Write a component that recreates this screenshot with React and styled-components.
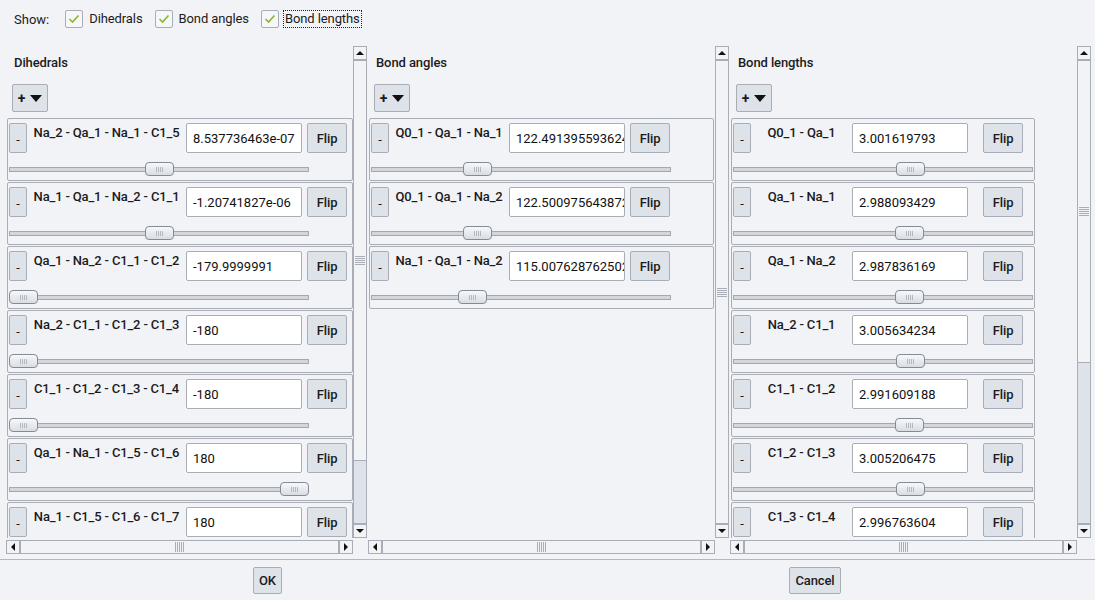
import React from 'react';
import styled, { createGlobalStyle } from 'styled-components';

const LINE = '#a8adb6';
const BTN = '#dee2e9';
const BG = '#f2f3f7';

const GlobalStyle = createGlobalStyle`
  html, body {
    margin: 0;
    padding: 0;
    background: ${BG};
  }
  body {
    font-family: Roboto, "Liberation Sans", sans-serif;
    font-size: 13px;
    color: #1b1b1b;
  }
`;

const Window = styled.div`
  width: 1095px;
  height: 600px;
  background: ${BG};
  display: flex;
  flex-direction: column;
  overflow: hidden;
`;

const ShowBar = styled.div`
  display: flex;
  align-items: center;
  height: 18px;
  padding: 10px 0 0 14px;
  margin-bottom: 18px;
`;

const ShowLabel = styled.span`
  margin-right: 16px;
`;

const CheckItem = styled.label`
  display: flex;
  align-items: center;
  margin-right: 10px;
`;

const Box = styled.span`
  width: 18px;
  height: 18px;
  box-sizing: border-box;
  border: 1px solid ${LINE};
  border-radius: 2px;
  background: #f6f7fa;
  display: flex;
  align-items: center;
  justify-content: center;
  margin-right: 6px;
`;

const CheckText = styled.span`
  line-height: 16px;
  padding: 0 1px;
  letter-spacing: -0.1px;
  border: 1px dotted ${(p) => (p.$focused ? '#222' : 'transparent')};
  margin-left: -2px;
`;

const Columns = styled.div`
  display: grid;
  grid-template-columns: repeat(3, 361px);
  column-gap: 1px;
  padding-left: 6px;
`;

const ScrollPane = styled.div`
  display: grid;
  grid-template-columns: 347px 14px;
  grid-template-rows: 492px 14px;
  row-gap: 2px;
`;

const Viewport = styled.div`
  overflow: hidden;
`;

const Title = styled.div`
  font-weight: 500;
  line-height: 16px;
  letter-spacing: -0.1px;
  padding: 9px 0 0 8px;
`;

const AddButton = styled.div`
  width: 36px;
  height: 28px;
  box-sizing: border-box;
  margin: 13px 0 0 6px;
  border: 1px solid ${LINE};
  border-radius: 2px;
  background: ${BTN};
  display: flex;
  align-items: center;
  justify-content: center;
  gap: 5px;
  font-weight: 700;
  font-size: 14px;
`;

const DownTriangle = styled.span`
  width: 0;
  height: 0;
  border-left: 6px solid transparent;
  border-right: 6px solid transparent;
  border-top: 7px solid #111;
`;

const RowList = styled.div`
  margin-top: 6px;
  padding-left: 1px;
  display: flex;
  flex-direction: column;
  gap: 1px;
`;

const RowBox = styled.div`
  width: ${(p) => p.$width}px;
  height: 63px;
  box-sizing: border-box;
  border: 1px solid ${LINE};
  border-radius: 2px;
  padding: 4px 0 0 1px;
  flex: none;
`;

const TopLine = styled.div`
  display: flex;
  height: 30px;
`;

const Button = styled.div`
  box-sizing: border-box;
  border: 1px solid ${LINE};
  border-radius: 2px;
  background: ${BTN};
  display: flex;
  align-items: center;
  justify-content: center;
  font-weight: 500;
  letter-spacing: -0.1px;
  color: #1b1b1b;
  flex: none;
`;

const MinusButton = styled(Button)`
  width: 18px;
  height: 30px;
  font-weight: 400;
  padding-top: 3px;
`;

const FlipButton = styled(Button)`
  width: 40px;
  height: 30px;
  margin-left: ${(p) => p.$gap}px;
`;

const BondLabel = styled.div`
  width: ${(p) => p.$width}px;
  flex: none;
  text-align: center;
  font-weight: 500;
  letter-spacing: -0.16px;
  line-height: 20px;
  white-space: nowrap;
`;

const Field = styled.input`
  width: 116px;
  height: 30px;
  box-sizing: border-box;
  border: 1px solid ${LINE};
  border-radius: 2px;
  background: #fff;
  padding: 0 0 0 6px;
  margin: 0;
  font: inherit;
  color: #111;
  outline: none;
  flex: none;
`;

const Slider = styled.div`
  position: relative;
  width: 300px;
  height: 14px;
  margin-top: 9px;
`;

const SliderTrack = styled.div`
  position: absolute;
  left: 0;
  right: 0;
  top: 5px;
  height: 5px;
  box-sizing: border-box;
  border: 1px solid #a2a8b1;
  background: #d2d7df;
`;

const SliderThumb = styled.div`
  position: absolute;
  top: 0;
  width: 29px;
  height: 14px;
  box-sizing: border-box;
  border: 1px solid #858b94;
  border-radius: 4px;
  background: linear-gradient(#f7f8fa, #d9dde4);
  display: flex;
  align-items: center;
  justify-content: center;

  &::after {
    content: '';
    width: 7px;
    height: 5px;
    background: repeating-linear-gradient(90deg, #b4b9c1 0 1px, transparent 1px 2px);
  }
`;

const VBar = styled.div`
  display: flex;
  flex-direction: column;
  box-sizing: border-box;
  border: 1px solid ${LINE};
  background: ${BTN};
`;

const HBar = styled.div`
  display: flex;
  box-sizing: border-box;
  border: 1px solid ${LINE};
  background: ${BTN};
`;

const ArrowCell = styled.div`
  flex: 0 0 12px;
  background: ${BG};
  display: flex;
  align-items: center;
  justify-content: center;
  border-${(p) => p.$edge}: 2px solid ${LINE};
`;

const Arrow = styled.span`
  width: 0;
  height: 0;
  ${(p) =>
    p.$dir === 'up' &&
    'border-left: 4px solid transparent; border-right: 4px solid transparent; border-bottom: 4px solid #111;'}
  ${(p) =>
    p.$dir === 'down' &&
    'border-left: 4px solid transparent; border-right: 4px solid transparent; border-top: 4px solid #111;'}
  ${(p) =>
    p.$dir === 'left' &&
    'border-top: 4px solid transparent; border-bottom: 4px solid transparent; border-right: 4px solid #111;'}
  ${(p) =>
    p.$dir === 'right' &&
    'border-top: 4px solid transparent; border-bottom: 4px solid transparent; border-left: 4px solid #111;'}
`;

const VTrack = styled.div`
  flex: 1;
  display: flex;
  flex-direction: column;
`;

const VThumb = styled.div`
  flex: ${(p) => (p.$size ? `0 0 ${p.$size}px` : '1')};
  background: ${BG};
  border-bottom: ${(p) => (p.$size ? `1px solid ${LINE}` : 'none')};
  display: flex;
  align-items: center;
  justify-content: center;

  &::after {
    content: '';
    width: 10px;
    height: 9px;
    background: repeating-linear-gradient(180deg, #a8adb6 0 1px, transparent 1px 2px);
  }
`;

const HThumb = styled.div`
  flex: 1;
  background: ${BG};
  display: flex;
  align-items: center;
  justify-content: center;

  &::after {
    content: '';
    width: 9px;
    height: 10px;
    background: repeating-linear-gradient(90deg, #a8adb6 0 1px, transparent 1px 2px);
  }
`;

const Corner = styled.div``;

const Footer = styled.div`
  margin-top: 5px;
  border-top: 1px solid #b3b8c0;
  display: grid;
  grid-template-columns: 535px 1fr;
  padding-top: 7px;
`;

const FooterCell = styled.div`
  display: flex;
  justify-content: center;
`;

const DialogButton = styled(Button)`
  height: 27px;
  padding: 0 ${(p) => p.$pad}px;
`;

const dihedrals = [
  ['Na_2 - Qa_1 - Na_1 - C1_5', '8.537736463e-07', 0],
  ['Na_1 - Qa_1 - Na_2 - C1_1', '-1.20741827e-06', 0],
  ['Qa_1 - Na_2 - C1_1 - C1_2', '-179.9999991', -180],
  ['Na_2 - C1_1 - C1_2 - C1_3', '-180', -180],
  ['C1_1 - C1_2 - C1_3 - C1_4', '-180', -180],
  ['Qa_1 - Na_1 - C1_5 - C1_6', '180', 180],
  ['Na_1 - C1_5 - C1_6 - C1_7', '180', 180],
];

const angles = [
  ['Q0_1 - Qa_1 - Na_1', '122.491395593624', 122.49],
  ['Q0_1 - Qa_1 - Na_2', '122.500975643872', 122.5],
  ['Na_1 - Qa_1 - Na_2', '115.007628762502', 115.0],
];

const lengths = [
  ['Q0_1 - Qa_1', '3.001619793', 3.0016],
  ['Qa_1 - Na_1', '2.988093429', 2.988],
  ['Qa_1 - Na_2', '2.987836169', 2.9878],
  ['Na_2 - C1_1', '3.005634234', 3.0056],
  ['C1_1 - C1_2', '2.991609188', 2.9916],
  ['C1_2 - C1_3', '3.005206475', 3.0052],
  ['C1_3 - C1_4', '2.996763604', 2.9968],
];

const panels = [
  { title: 'Dihedrals', rows: dihedrals, min: -180, max: 180, label: 159, gap: 5, width: 346, thumb: 399 },
  { title: 'Bond angles', rows: angles, min: 0, max: 360, label: 120, gap: 5, width: 345, thumb: 0 },
  { title: 'Bond lengths', rows: lengths, min: 0, max: 5, label: 101, gap: 15, width: 304, thumb: 301 },
];

function BondRow({ name, text, value, panel }) {
  const frac = (value - panel.min) / (panel.max - panel.min);
  const left = Math.round(frac * (300 - 29));
  return (
    <RowBox $width={panel.width}>
      <TopLine>
        <MinusButton>-</MinusButton>
        <BondLabel $width={panel.label}>{name}</BondLabel>
        <Field readOnly value={text} />
        <FlipButton $gap={panel.gap}>Flip</FlipButton>
      </TopLine>
      <Slider>
        <SliderTrack />
        <SliderThumb style={{ left }} />
      </Slider>
    </RowBox>
  );
}

function Panel({ panel }) {
  return (
    <ScrollPane>
      <Viewport>
        <Title>{panel.title}</Title>
        <AddButton>
          +<DownTriangle />
        </AddButton>
        <RowList>
          {panel.rows.map(([name, text, value]) => (
            <BondRow key={name} name={name} text={text} value={value} panel={panel} />
          ))}
        </RowList>
      </Viewport>
      <VBar>
        <ArrowCell $edge="bottom">
          <Arrow $dir="up" />
        </ArrowCell>
        <VTrack>
          <VThumb $size={panel.thumb} />
        </VTrack>
        <ArrowCell $edge="top">
          <Arrow $dir="down" />
        </ArrowCell>
      </VBar>
      <HBar>
        <ArrowCell $edge="right">
          <Arrow $dir="left" />
        </ArrowCell>
        <HThumb />
        <ArrowCell $edge="left">
          <Arrow $dir="right" />
        </ArrowCell>
      </HBar>
      <Corner />
    </ScrollPane>
  );
}

function CheckMark() {
  return (
    <svg width="12" height="10" viewBox="0 0 12 10">
      <path d="M1.5 5 L4.5 8 L10.5 1.5" fill="none" stroke="#8db52a" strokeWidth="1.6" />
    </svg>
  );
}

export default function App() {
  return (
    <Window>
      <GlobalStyle />
      <ShowBar>
        <ShowLabel>Show:</ShowLabel>
        <CheckItem>
          <Box>
            <CheckMark />
          </Box>
          <CheckText>Dihedrals</CheckText>
        </CheckItem>
        <CheckItem>
          <Box>
            <CheckMark />
          </Box>
          <CheckText>Bond angles</CheckText>
        </CheckItem>
        <CheckItem>
          <Box>
            <CheckMark />
          </Box>
          <CheckText $focused>Bond lengths</CheckText>
        </CheckItem>
      </ShowBar>
      <Columns>
        {panels.map((p) => (
          <Panel key={p.title} panel={p} />
        ))}
      </Columns>
      <Footer>
        <FooterCell>
          <DialogButton $pad={5}>OK</DialogButton>
        </FooterCell>
        <FooterCell>
          <DialogButton $pad={5}>Cancel</DialogButton>
        </FooterCell>
      </Footer>
    </Window>
  );
}
